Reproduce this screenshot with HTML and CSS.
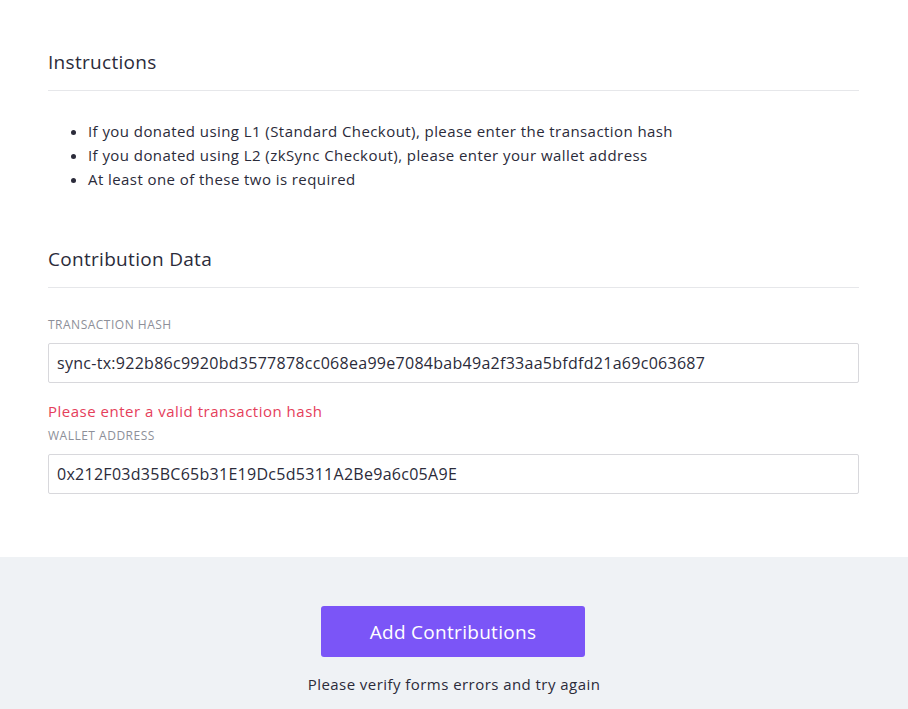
FILE: index.html
```html
<!DOCTYPE html>
<html lang="en">
<head>
    <meta charset="UTF-8">
    <meta name="viewport" content="width=device-width, initial-scale=1.0">
    <title>Add Contributions</title>
    <link rel="stylesheet" href="styles.css">
</head>
<body>
    <div class="page">
        <section class="section instructions">
            <h2 class="section-title">Instructions</h2>
            <ul class="instruction-list">
                <li>If you donated using L1 (Standard Checkout), please enter the transaction hash</li>
                <li>If you donated using L2 (zkSync Checkout), please enter your wallet address</li>
                <li>At least one of these two is required</li>
            </ul>
        </section>

        <section class="section contribution">
            <h2 class="section-title">Contribution Data</h2>
            <div class="field">
                <label class="field-label" for="txHash">Transaction Hash</label>
                <input class="field-input" id="txHash" type="text" value="sync-tx:922b86c9920bd3577878cc068ea99e7084bab49a2f33aa5bfdfd21a69c063687">
                <div class="field-error">Please enter a valid transaction hash</div>
            </div>
            <div class="field">
                <label class="field-label" for="wallet">Wallet Address</label>
                <input class="field-input" id="wallet" type="text" value="0x212F03d35BC65b31E19Dc5d5311A2Be9a6c05A9E">
            </div>
        </section>
    </div>

    <footer class="actions">
        <button class="btn-primary">Add Contributions</button>
        <div class="actions-note">Please verify forms errors and try again</div>
    </footer>
</body>
</html>
```

FILE: styles.css
```css
body, html {
    margin: 0;
    padding: 0;
    font-family: "Open Sans", Lato, Arial, sans-serif;
    color: #2b2b3a;
    background: #ffffff;
}
.page {
    padding: 50px 49px 63px 48px;
}
.section-title {
    margin: 0;
    padding-bottom: 16px;
    border-bottom: 1px solid #e6e7ea;
    font-size: 19px;
    line-height: 24px;
    font-weight: 400;
    letter-spacing: 0.3px;
}
.instruction-list {
    margin: 28px 0 56px 0;
    padding-left: 40px;
    font-size: 15px;
    line-height: 24px;
    letter-spacing: 0.43px;
}
.contribution .section-title {
    margin-bottom: 29px;
}
.field-label {
    display: block;
    font-size: 12px;
    line-height: 16px;
    text-transform: uppercase;
    color: #8d8f99;
    letter-spacing: 0.5px;
    margin-bottom: 10px;
}
.field-input {
    display: block;
    box-sizing: border-box;
    width: 100%;
    height: 40px;
    padding: 0 8px;
    border: 1px solid #d8d8dc;
    border-radius: 2px;
    font-family: inherit;
    font-size: 16px;
    letter-spacing: 0.28px;
    color: #2b2b3a;
    outline: none;
}
.field-error {
    margin-top: 18px;
    font-size: 15px;
    line-height: 20px;
    letter-spacing: 0.5px;
    color: #e5405b;
}
.field + .field {
    margin-top: 7px;
}
.actions {
    background: #eff2f5;
    padding: 49px 0 40px;
    display: flex;
    flex-direction: column;
    align-items: center;
}
.btn-primary {
    width: 264px;
    height: 51px;
    margin-right: 2px;
    background: #7b55f7;
    border: none;
    border-radius: 3px;
    color: #ffffff;
    font-family: inherit;
    font-size: 19px;
    letter-spacing: 0.3px;
    cursor: pointer;
}
.actions-note {
    margin-top: 17px;
    font-size: 15px;
    line-height: 20px;
    letter-spacing: 0.45px;
}
```
